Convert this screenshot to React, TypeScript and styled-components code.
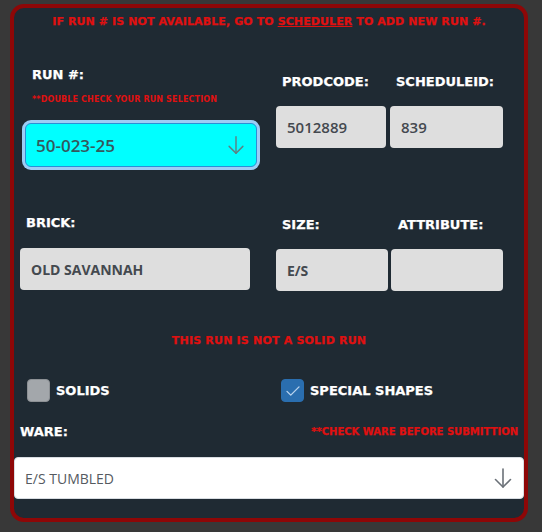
import React from "react";
import styled, { createGlobalStyle } from "styled-components";

const Global = createGlobalStyle`
  html, body { margin: 0; padding: 0; background: #383838; }
  * { box-sizing: border-box; }
`;

const Page = styled.div`
  width: 542px;
  height: 532px;
  padding: 4px 14px 10px 10px;
  background: #383838;
`;

const Card = styled.div`
  width: 518px;
  height: 518px;
  border: 4px solid #8e0707;
  border-radius: 14px;
  background: #1f2a33;
  display: flex;
  flex-direction: column;
  overflow: hidden;
`;

const heavy = `font-family: "DejaVu Sans", "Liberation Sans", sans-serif; font-weight: 700; -webkit-text-stroke: 0.25px currentColor;`;

const Notice = styled.div<{ $size: number; $top: number; $align?: string; $ls?: number }>`
  ${heavy}
  color: #e01010;
  font-size: ${(p) => p.$size}px;
  letter-spacing: ${(p) => p.$ls ?? 0}px;
  line-height: 14px;
  text-align: ${(p) => p.$align || "center"};
  margin-top: ${(p) => p.$top}px;
  white-space: nowrap;
  a { color: inherit; text-decoration: underline; }
`;

const Row = styled.div`
  display: grid;
  grid-template-columns: 254px 1fr;
`;

const Col = styled.div<{ $pl: number }>`
  display: flex;
  flex-direction: column;
  padding-left: ${(p) => p.$pl}px;
`;

const Pair = styled.div<{ $gap: number }>`
  display: flex;
  gap: ${(p) => p.$gap}px;
`;

const Field = styled.div<{ $w: number }>`
  display: flex;
  flex-direction: column;
  width: ${(p) => p.$w}px;
`;

const Label = styled.div<{ $top: number; $pl: number }>`
  ${heavy}
  color: #ffffff;
  font-size: 13px;
  line-height: 16px;
  margin-top: ${(p) => p.$top}px;
  padding-left: ${(p) => p.$pl}px;
  white-space: nowrap;
`;

const Hint = styled.div`
  ${heavy}
  -webkit-text-stroke: 0;
  color: #e01010;
  font-size: 8px;
  letter-spacing: 0.15px;
  line-height: 10px;
  margin-top: 12px;
  padding-left: 7px;
  white-space: nowrap;
`;

const RunSelect = styled.div`
  margin-top: 18px;
  width: 232px;
  height: 44px;
  background: #00ffff;
  border: 1px solid #2b8fd6;
  border-radius: 6px;
  box-shadow: 0 0 0 3px #9ccdf5;
  display: flex;
  align-items: center;
  justify-content: space-between;
  padding: 0 9px 0 10px;
  font-family: "Open Sans", sans-serif;
  font-weight: 600;
  font-size: 17px;
  color: #34595d;
`;

const Input = styled.div<{ $w: number; $top: number; $size: number; $weight: number }>`
  width: ${(p) => p.$w}px;
  height: 42px;
  margin-top: ${(p) => p.$top}px;
  background: #dedede;
  border-radius: 4px;
  display: flex;
  align-items: center;
  padding-left: 11px;
  font-family: "Open Sans", sans-serif;
  font-weight: ${(p) => p.$weight};
  font-size: ${(p) => p.$size}px;
  color: #44494f;
`;

const CheckRow = styled.div`
  display: grid;
  grid-template-columns: 254px 1fr;
  margin-top: 31px;
`;

const Check = styled.label<{ $pl: number }>`
  display: flex;
  align-items: center;
  gap: 6px;
  padding-left: ${(p) => p.$pl}px;
  ${heavy}
  color: #ffffff;
  font-size: 13px;
`;

const Box = styled.span<{ $on?: boolean }>`
  width: 23px;
  height: 23px;
  border-radius: 4px;
  background: ${(p) => (p.$on ? "#2a6eaf" : "#a3a7ab")};
  border: 1px solid ${(p) => (p.$on ? "#2a6eaf" : "#8d9195")};
  display: flex;
  align-items: center;
  justify-content: center;
`;

const WareHead = styled.div`
  display: flex;
  justify-content: space-between;
  align-items: center;
  margin-top: 22px;
  padding: 0 6px 0 6px;
`;

const WareSelect = styled.div`
  margin-top: 17px;
  height: 42px;
  background: #ffffff;
  border-radius: 4px;
  border: 1px solid #d8dde2;
  display: flex;
  align-items: center;
  justify-content: space-between;
  padding: 0 8px 0 10px;
  font-family: "Open Sans", sans-serif;
  font-size: 14px;
  color: #555a5f;
`;

const Arrow = ({ color, size }: { color: string; size: number }) => (
  <svg width={size} height={size} viewBox="0 0 24 24" fill="none" stroke={color} strokeWidth="1.6" strokeLinecap="round" strokeLinejoin="round">
    <path d="M12 3v18" />
    <path d="M19.5 13.5L12 21l-7.5-7.5" />
  </svg>
);

export default function App() {
  return (
    <>
      <Global />
      <Page>
        <Card>
          <Notice $size={11} $ls={0.1} $top={7}>
            IF RUN # IS NOT AVAILABLE, GO TO <a>SCHEDULER</a> TO ADD NEW RUN #.
          </Notice>
          <Row>
            <Col $pl={11}>
              <Label $top={38} $pl={7}>RUN #:</Label>
              <Hint>**DOUBLE CHECK YOUR RUN SELECTION</Hint>
              <RunSelect>
                <span>50-023-25</span>
                <Arrow color="#5d8184" size={22} />
              </RunSelect>
            </Col>
            <Col $pl={8}>
              <Pair $gap={4}>
                <Field $w={110}>
                  <Label $top={45} $pl={6}>PRODCODE:</Label>
                  <Input $w={110} $top={16} $size={15} $weight={600}>5012889</Input>
                </Field>
                <Field $w={113}>
                  <Label $top={45} $pl={6}>SCHEDULEID:</Label>
                  <Input $w={113} $top={16} $size={15} $weight={600}>839</Input>
                </Field>
              </Pair>
            </Col>
          </Row>
          <Row>
            <Col $pl={6}>
              <Label $top={48} $pl={6}>BRICK:</Label>
              <Input $w={230} $top={17} $size={14} $weight={700}>OLD SAVANNAH</Input>
            </Col>
            <Col $pl={8}>
              <Pair $gap={3}>
                <Field $w={112}>
                  <Label $top={50} $pl={6}>SIZE:</Label>
                  <Input $w={112} $top={16} $size={14} $weight={700}>E/S</Input>
                </Field>
                <Field $w={112}>
                  <Label $top={50} $pl={7}>ATTRIBUTE:</Label>
                  <Input $w={112} $top={16} $size={14} $weight={700}></Input>
                </Field>
              </Pair>
            </Col>
          </Row>
          <Notice $size={11} $ls={0.2} $top={43}>THIS RUN IS NOT A SOLID RUN</Notice>
          <CheckRow>
            <Check $pl={13}>
              <Box />
              SOLIDS
            </Check>
            <Check $pl={13}>
              <Box $on>
                <svg width="18" height="18" viewBox="0 0 24 24" fill="none" stroke="#b9d3ee" strokeWidth="1.8" strokeLinecap="round" strokeLinejoin="round">
                  <path d="M4 12.5l5 5L20 6.5" />
                </svg>
              </Box>
              SPECIAL SHAPES
            </Check>
          </CheckRow>
          <WareHead>
            <Label $top={0} $pl={0}>WARE:</Label>
            <Notice $size={10} $top={0} $align="right">**CHECK WARE BEFORE SUBMITTION</Notice>
          </WareHead>
          <WareSelect>
            <span>E/S TUMBLED</span>
            <Arrow color="#6b7178" size={24} />
          </WareSelect>
        </Card>
      </Page>
    </>
  );
}
